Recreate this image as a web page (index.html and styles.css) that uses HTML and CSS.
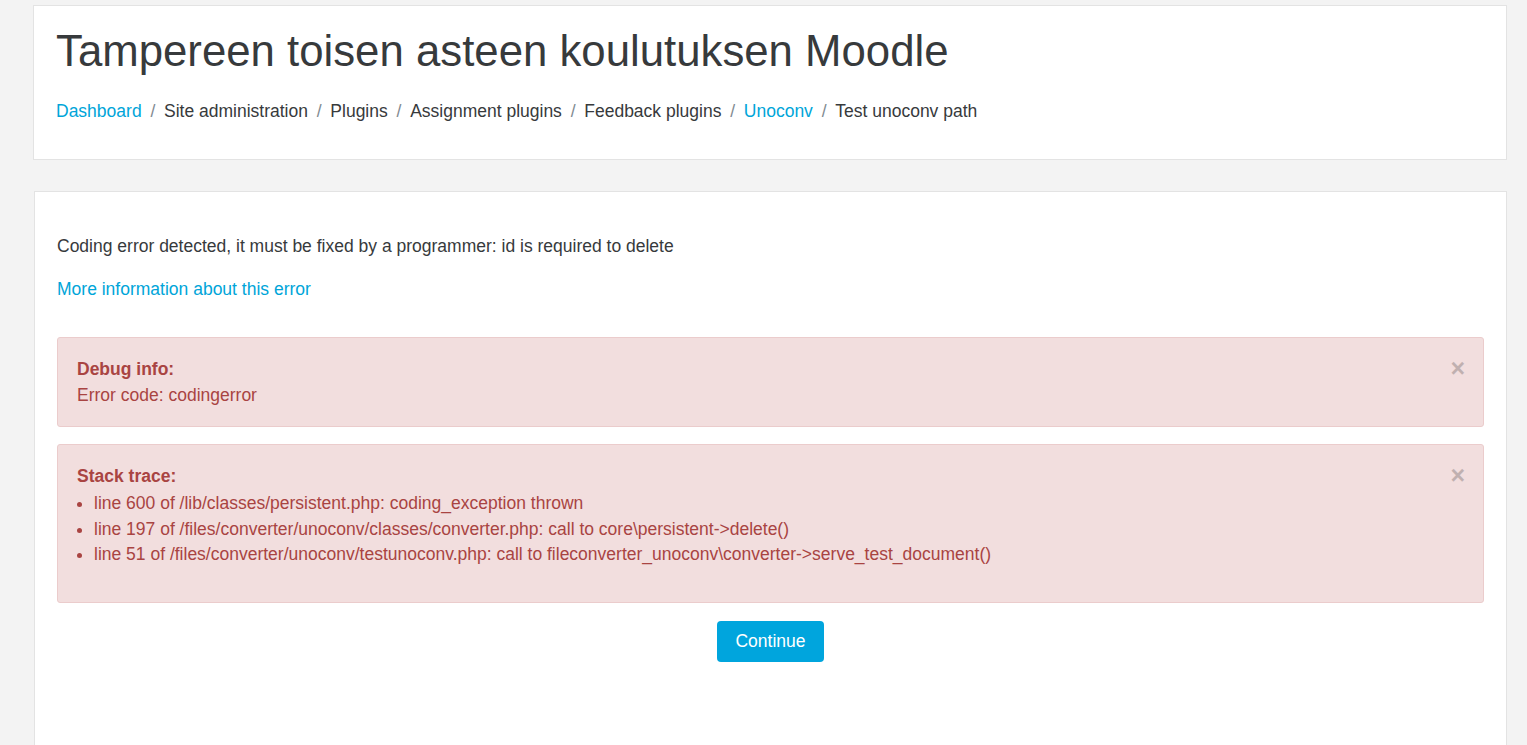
FILE: index.html
```html
<!DOCTYPE html>
<html lang="en">

<head>
    <meta charset="UTF-8">
    <meta name="viewport" content="width=device-width, initial-scale=1.0">
    <title>Test unoconv path</title>
    <link rel="stylesheet" href="styles.css">
</head>

<body>
    <div class="page">
        <header class="card page-header">
            <h1>Tampereen toisen asteen koulutuksen Moodle</h1>
            <nav class="breadcrumb">
                <a href="#">Dashboard</a>
                <span class="sep">/</span>
                <span>Site administration</span>
                <span class="sep">/</span>
                <span>Plugins</span>
                <span class="sep">/</span>
                <span>Assignment plugins</span>
                <span class="sep">/</span>
                <span>Feedback plugins</span>
                <span class="sep">/</span>
                <a href="#">Unoconv</a>
                <span class="sep">/</span>
                <span>Test unoconv path</span>
            </nav>
        </header>

        <main class="card main-card">
            <p class="errormessage">Coding error detected, it must be fixed by a programmer: id is required to delete</p>
            <p class="moreinfo"><a href="#">More information about this error</a></p>

            <div class="alert">
                <button class="close">&times;</button>
                <p class="alert-title">Debug info:</p>
                <p>Error code: codingerror</p>
            </div>

            <div class="alert">
                <button class="close">&times;</button>
                <p class="alert-title">Stack trace:</p>
                <ul>
                    <li>line 600 of /lib/classes/persistent.php: coding_exception thrown</li>
                    <li>line 197 of /files/converter/unoconv/classes/converter.php: call to core\persistent-&gt;delete()</li>
                    <li>line 51 of /files/converter/unoconv/testunoconv.php: call to fileconverter_unoconv\converter-&gt;serve_test_document()</li>
                </ul>
            </div>

            <div class="continue">
                <button class="btn-primary">Continue</button>
            </div>
        </main>
    </div>
</body>

</html>
```

FILE: styles.css
```css
body {
    font-family: "Liberation Sans", Arial, sans-serif;
    font-size: 17.5px;
    line-height: 1.5;
    color: #373a3c;
    background-color: #f3f3f3;
    margin: 0;
}

a {
    color: #00a5d9;
    text-decoration: none;
}

p {
    margin: 0;
}

.page {
    padding: 5px 20px 0 33px;
}

.card {
    background-color: #fff;
    border: 1px solid #e3e3e3;
}

.page-header {
    padding: 19px 22px 35px;
    margin-bottom: 31px;
}

h1 {
    font-size: 43.75px;
    font-weight: normal;
    line-height: 1.2;
    margin: 0 0 20px;
    color: #373a3c;
}

.breadcrumb {
    display: flex;
    gap: 8.75px;
}

.breadcrumb .sep {
    color: #818a91;
}

/* card runs off the bottom of the window, so no bottom edge */
.main-card {
    margin-left: 1px;
    border-bottom: 0;
    padding: 41px 22px 0;
    min-height: 512px;
}

.errormessage {
    margin-bottom: 17px;
}

.moreinfo {
    margin-bottom: 35px;
}

.alert {
    position: relative;
    background-color: #f2dede;
    border: 1px solid #ebcccc;
    border-radius: 3px;
    color: #a94442;
    padding: 18px 20px 18px 19px;
    margin-bottom: 17px;
    line-height: 26px;
}

.alert-title {
    font-weight: bold;
}

.alert ul {
    margin: 2px 0 16px;
    padding-left: 17px;
    line-height: 25.5px;
}

.close {
    position: absolute;
    top: 18px;
    right: 18px;
    background: none;
    border: none;
    padding: 0;
    font-family: "Liberation Sans", Arial, sans-serif;
    font-size: 25px;
    font-weight: bold;
    line-height: 1;
    color: #000;
    opacity: 0.2;
    cursor: pointer;
}

.continue {
    display: flex;
    justify-content: center;
    padding-top: 1px;
}

.btn-primary {
    background-color: #00a5dd;
    color: #fff;
    border: none;
    border-radius: 4px;
    font-family: "Liberation Sans", Arial, sans-serif;
    font-size: 17.5px;
    padding: 0 18px;
    height: 41px;
    cursor: pointer;
}
```
